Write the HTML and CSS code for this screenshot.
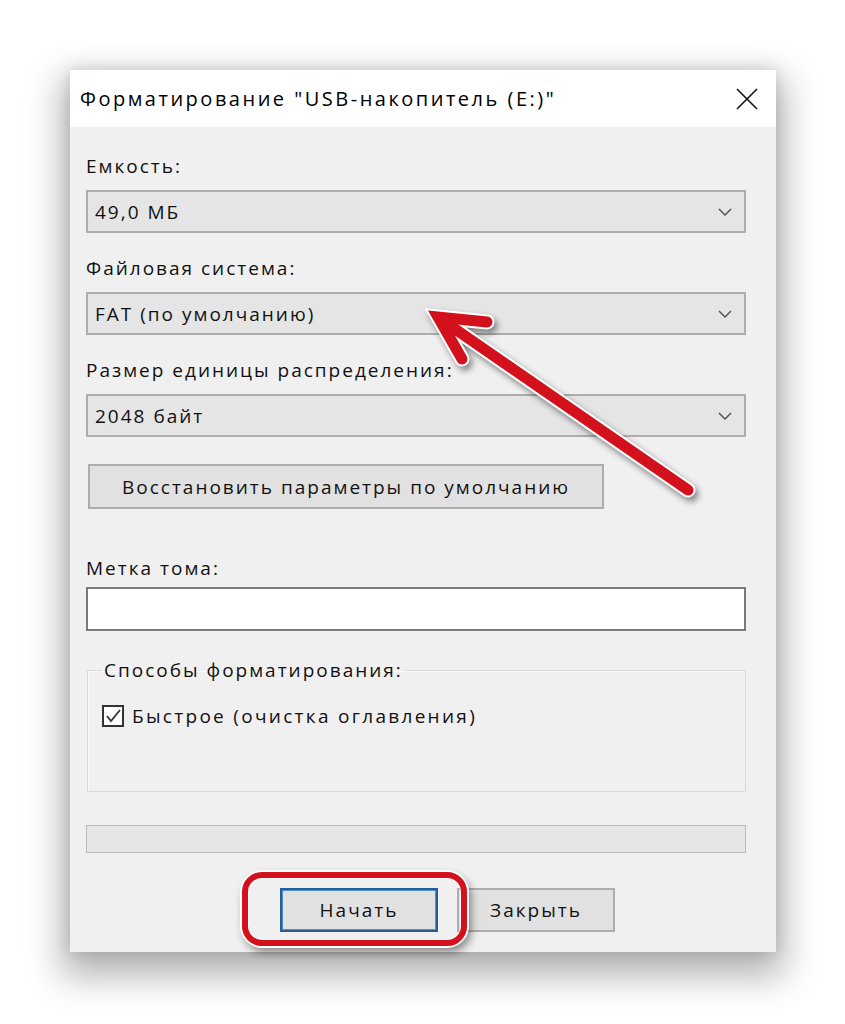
FILE: index.html
```html
<!DOCTYPE html>
<html lang="ru">
<head>
    <meta charset="UTF-8">
    <meta name="viewport" content="width=device-width, initial-scale=1.0">
    <title>Форматирование</title>
    <link rel="stylesheet" href="styles.css">
</head>
<body>
    <div class="stage">
        <div class="dialog">
            <div class="titlebar">
                <span class="title">Форматирование "USB-накопитель (E:)"</span>
                <svg class="close" width="22" height="22" viewBox="0 0 22 22">
                    <path d="M1 1 L21 21 M21 1 L1 21" stroke="#111" stroke-width="1.6" fill="none"/>
                </svg>
            </div>
            <div class="content">
                <div class="field">
                    <div class="label">Емкость:</div>
                    <div class="combo">
                        <span>49,0 МБ</span>
                        <svg class="chevron" width="14" height="8" viewBox="0 0 14 8"><polyline points="1,1 7,7 13,1" fill="none" stroke="#555" stroke-width="1.5"/></svg>
                    </div>
                </div>
                <div class="field">
                    <div class="label">Файловая система:</div>
                    <div class="combo">
                        <span>FAT (по умолчанию)</span>
                        <svg class="chevron" width="14" height="8" viewBox="0 0 14 8"><polyline points="1,1 7,7 13,1" fill="none" stroke="#555" stroke-width="1.5"/></svg>
                    </div>
                </div>
                <div class="field">
                    <div class="label">Размер единицы распределения:</div>
                    <div class="combo">
                        <span>2048 байт</span>
                        <svg class="chevron" width="14" height="8" viewBox="0 0 14 8"><polyline points="1,1 7,7 13,1" fill="none" stroke="#555" stroke-width="1.5"/></svg>
                    </div>
                </div>

                <button class="btn restore">Восстановить параметры по умолчанию</button>

                <div class="label vol-label">Метка тома:</div>
                <div class="textbox"></div>

                <fieldset class="group">
                    <legend>Способы форматирования:</legend>
                    <label class="check">
                        <span class="box">
                            <svg width="18" height="18" viewBox="0 0 18 18"><polyline points="3,9 7,14 16,3" fill="none" stroke="#333" stroke-width="1.8"/></svg>
                        </span>
                        Быстрое (очистка оглавления)
                    </label>
                </fieldset>

                <div class="progress"></div>

                <div class="actions">
                    <span class="ring-wrap">
                        <button class="btn action primary">Начать</button>
                        <span class="ring"></span>
                    </span>
                    <button class="btn action">Закрыть</button>
                </div>
            </div>
        </div>

        <svg class="arrow" width="845" height="1024" viewBox="0 0 845 1024">
            <g fill="none" stroke="#fff" stroke-width="15" stroke-linecap="round" stroke-linejoin="miter">
                <path d="M688 490 L442 320"/>
                <path d="M487 322 L438 317 L462 359"/>
            </g>
            <g fill="none" stroke="#d3111c" stroke-width="11" stroke-linecap="round" stroke-linejoin="miter">
                <path d="M688 490 L442 320"/>
                <path d="M487 322 L438 317 L462 359"/>
            </g>
        </svg>
    </div>
</body>
</html>
```

FILE: styles.css
```css
body {
    margin: 0;
    background: #fff;
    font-family: "Open Sans", "Noto Sans", sans-serif;
    font-size: 19px;
    letter-spacing: 2px;
    color: #111;
}
.stage {
    position: relative;
    width: 845px;
    height: 1024px;
    padding: 70px 0 0 70px;
    box-sizing: border-box;
}
.dialog {
    width: 706px;
    box-shadow: 0 16px 34px 8px rgba(0,0,0,0.3), 0 0 14px rgba(0,0,0,0.12);
}
.titlebar {
    height: 57px;
    background: #fff;
    display: flex;
    align-items: center;
    justify-content: space-between;
    padding: 0 18px 0 10px;
}
.title {
    color: #000;
    font-size: 20px;
    letter-spacing: 2.5px;
}
.content {
    background: #f0f0f0;
    padding: 27px 30px 20px 16px;
}
.label {
    line-height: 24px;
}
.field + .field {
    margin-top: 23px;
}
.combo {
    margin-top: 12px;
    height: 43px;
    box-sizing: border-box;
    border: 2px solid #adadad;
    background: #e5e5e5;
    display: flex;
    align-items: center;
    justify-content: space-between;
    padding: 0 12px 0 7px;
}
.btn {
    font: inherit;
    letter-spacing: inherit;
    color: #111;
    background: #e1e1e1;
    border: 2px solid #adadad;
    padding: 0;
}
.restore {
    display: block;
    margin: 27px 0 0 2px;
    width: 516px;
    height: 45px;
}
.vol-label {
    margin-top: 47px;
}
.textbox {
    margin-top: 7px;
    height: 44px;
    box-sizing: border-box;
    border: 2px solid #7a7a7a;
    background: #fff;
}
.group {
    margin: 27px 0 0 1px;
    padding: 22px 14px 63px 14px;
    border: 1px solid #d9d9d9;
    box-shadow: inset 1px 1px 0 #fafafa;
}
.group legend {
    padding: 0 2px;
    line-height: 24px;
}
.check {
    display: flex;
    align-items: center;
    gap: 8px;
    line-height: 24px;
    letter-spacing: 2.3px;
}
.box {
    width: 22px;
    height: 22px;
    box-sizing: border-box;
    border: 2px solid #333;
    background: #fff;
    display: flex;
    align-items: center;
    justify-content: center;
}
.progress {
    margin-top: 33px;
    height: 28px;
    box-sizing: border-box;
    border: 1px solid #bcbcbc;
    background: #e6e6e6;
}
.actions {
    margin-top: 35px;
    display: flex;
    gap: 19px;
    padding-left: 194px;
}
.ring-wrap {
    position: relative;
    display: flex;
}
.action {
    width: 158px;
    height: 44px;
}
.primary {
    border-color: #2a5b91;
    box-shadow: inset 0 0 0 1px #4a90d6;
}
.ring {
    position: absolute;
    left: -38px;
    top: -16px;
    right: -29px;
    bottom: -14px;
    border: 6px solid #d3111c;
    border-radius: 20px;
    box-shadow: 0 0 0 2px #fff, 3px 5px 8px 1px rgba(0,0,0,0.45), inset 0 0 0 1px rgba(255,255,255,0.8);
}
.arrow {
    position: absolute;
    top: 0;
    left: 0;
    pointer-events: none;
    filter: drop-shadow(3px 4px 3px rgba(0,0,0,0.45));
}
```
